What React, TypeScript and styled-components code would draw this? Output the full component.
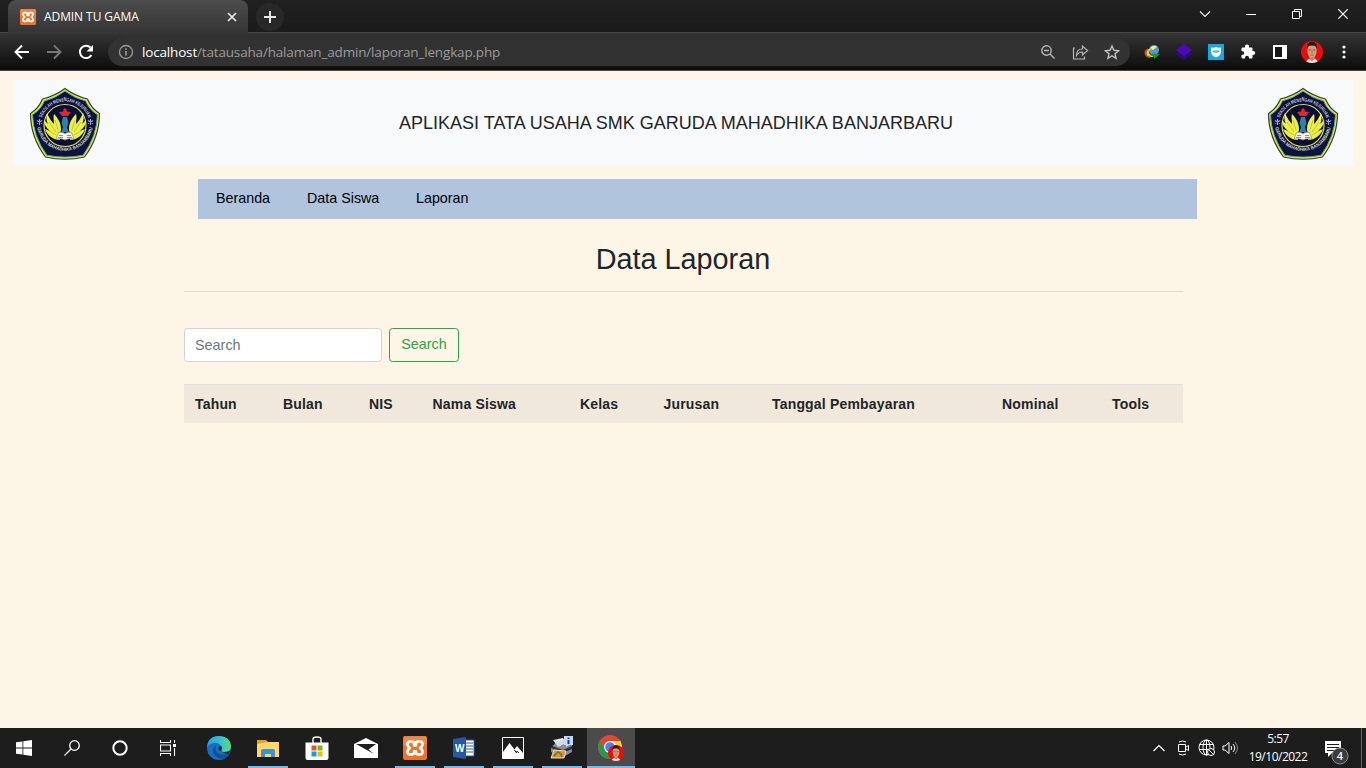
import React from 'react';
import styled, { createGlobalStyle } from 'styled-components';

const Global = createGlobalStyle`
  * { box-sizing: border-box; }
  html, body { margin: 0; padding: 0; overflow: hidden; }
  svg { display: block; flex: none; }
`;

const Screen = styled.div`
  width: 1366px;
  height: 768px;
  display: flex;
  flex-direction: column;
  background: #fdf5e6;
  font-family: 'Liberation Sans', Arial, sans-serif;
`;

/* ---------- browser chrome ---------- */
const TabStrip = styled.div`
  height: 33px;
  flex: none;
  display: flex;
  background: linear-gradient(#202020, #1b1b1b);
  box-shadow: inset 0 -1px 0 #484848;
  padding-left: 8px;
`;
const Tab = styled.div`
  width: 240px;
  height: 33px;
  display: flex;
  align-items: center;
  padding: 1px 10px 0 12px;
  border-radius: 8px 8px 0 0;
  background: linear-gradient(#4c4c4c, #353535);
`;
const TabTitle = styled.span`
  font: 12px/16px 'Open Sans', 'Noto Sans', sans-serif;
  letter-spacing: -0.08px;
  color: #fff;
  margin-left: 8px;
  flex: 1;
  white-space: nowrap;
`;
const NewTab = styled.div`
  width: 28px;
  height: 28px;
  margin: 3px 0 0 8px;
  border-radius: 50%;
  background: #282828;
  display: grid;
  place-items: center;
`;
const WindowButtons = styled.div`
  margin-left: auto;
  display: flex;
  height: 28px;
`;
const WindowButton = styled.div`
  width: 46px;
  display: grid;
  place-items: center;
`;
const Toolbar = styled.div`
  height: 38px;
  flex: none;
  display: flex;
  align-items: center;
  background: linear-gradient(#343434, #0c0c0c);
  border-bottom: 1px solid #484848;
  padding-left: 12px;
`;
const NavIcons = styled.div`
  display: flex;
  flex: none;
  gap: 12px;
  width: 96px;
`;
const AddressBar = styled.div`
  width: 1022px;
  flex: none;
  height: 28px;
  border-radius: 14px;
  background: #323232;
  display: flex;
  align-items: center;
  padding: 0 8px 0 10px;
`;
const Url = styled.div`
  flex: 1;
  margin-left: 8px;
  font: 13.5px/20px 'Open Sans', 'Noto Sans', sans-serif;
  letter-spacing: -0.17px;
  color: #9b9b9b;
  b { font-weight: 400; color: #fff; }
`;
const AddressIcons = styled.div`
  display: flex;
  gap: 12px;
`;
const Extensions = styled.div`
  display: flex;
  align-items: center;
  flex: none;
  width: 224px;
  margin-left: 6px;
`;
const Extension = styled.div`
  width: 32px;
  display: grid;
  place-items: center;
  flex: none;
`;

/* ---------- page ---------- */
const Page = styled.main`
  flex: 1;
  color: #212529;
  padding: 9px 13px 0 14px;
`;
const Header = styled.header`
  height: 86px;
  background: #f8f9fa;
  display: flex;
  align-items: center;
  justify-content: space-between;
  padding: 1px 14px 0 15px;
`;
const HeaderTitle = styled.div`
  font-size: 18px;
  line-height: 27px;
  white-space: nowrap;
  padding: 0 16px 1px 0;
`;
const Container = styled.div`
  width: 999px;
  margin: 13px 0 0 170px;
`;
const Nav = styled.nav`
  height: 40px;
  width: 999px;
  margin-left: 14px;
  padding: 8px 18px;
  display: flex;
  background: #b0c4de;
`;
const NavLink = styled.a<{ $width: number }>`
  width: ${p => p.$width}px;
  font-size: 14.3px;
  line-height: 22px;
  color: #000;
  white-space: nowrap;
`;
const Heading = styled.h3`
  margin: 23px 0 0;
  font-size: 28.8px;
  line-height: 34px;
  font-weight: 400;
  text-align: center;
  padding-right: 1px;
`;
const Rule = styled.hr`
  margin: 15px 0 36px;
  border: 0;
  height: 1px;
  background: #e3dccf;
`;
const SearchForm = styled.form`
  display: flex;
  gap: 7px;
  height: 34px;
  margin-bottom: 22px;
`;
const SearchInput = styled.input`
  width: 198px;
  border: 1px solid #ced4da;
  border-radius: 3.6px;
  background: #fff;
  padding: 0 10px;
  font: 14.4px 'Liberation Sans', Arial, sans-serif;
  &::placeholder { color: #6c757d; opacity: 1; }
`;
const SearchButton = styled.button`
  width: 70px;
  padding: 0 0 2px;
  border: 1px solid #28a745;
  border-radius: 3.6px;
  background: transparent;
  color: #28a745;
  font: 14.4px 'Liberation Sans', Arial, sans-serif;
`;
const Table = styled.table`
  width: 999px;
  table-layout: fixed;
  border-collapse: separate;
  border-spacing: 0;
`;
const HeadCell = styled.th<{ $width: number }>`
  width: ${p => p.$width}px;
  height: 39px;
  padding: 1px 0 0 11px;
  border-top: 1px solid #dee2e6;
  background: #f0e8da;
  text-align: left;
  font-size: 14px;
  line-height: 21px;
  letter-spacing: 0.18px;
  white-space: nowrap;
`;

/* ---------- taskbar ---------- */
const Taskbar = styled.footer`
  height: 40px;
  flex: none;
  display: flex;
  background: #1d1d1d;
`;
const SystemButtons = styled.div`
  display: flex;
  margin-right: 2.5px;
`;
const TaskItem = styled.div`
  width: 48px;
  height: 40px;
  display: grid;
  place-items: center;
`;
const AppItem = styled.div<{ $open?: boolean; $active?: boolean }>`
  width: ${p => (p.$active ? 48 : 40)}px;
  margin: 0 ${p => (p.$active ? 0 : 4.5)}px;
  height: 40px;
  display: grid;
  place-items: center;
  background: ${p => (p.$active ? '#4b4b4b' : 'transparent')};
  box-shadow: ${p => (p.$open || p.$active ? 'inset 0 -2px 0 #76b9ed' : 'none')};
`;
const Tray = styled.div`
  margin-left: auto;
  display: flex;
  align-items: center;
`;
const TrayIcon = styled.div<{ $width: number }>`
  width: ${p => p.$width}px;
  display: grid;
  place-items: center;
`;
const Notifications = styled.div`
  width: 47px;
  padding: 7px 0 0 9px;
`;
const Clock = styled.div`
  width: 72px;
  text-align: center;
  color: #fff;
  font: 12px/18px 'Open Sans', 'Noto Sans', sans-serif;
  letter-spacing: -0.5px;
`;
const ShowDesktop = styled.div`
  width: 5px;
  height: 40px;
  border-left: 1px solid #666;
`;

const Xampp = ({ size }: { size: number }) => (
  <svg width={size} height={size} viewBox="0 0 24 24">
    <rect width="24" height="24" rx="2" fill="#ee7326" />
    <path d="M.5.500h23v8Q12 6 .5 10z" fill="#fff" opacity=".16" />
    <g fill="none" stroke="#fff" strokeWidth="2.600" strokeLinecap="round" strokeLinejoin="round">
      <path d="M9 5.500H7Q4.500 5.500 4.500 8q0 2.700 2.500 4-2.500 1.300-2.500 4 0 2.500 2.500 2.500h2q2 0 2-2v-1h2v1q0 2 2 2h2q2.500 0 2.500-2.500 0-2.700-2.500-4 2.500-1.300 2.500-4 0-2.500-2.500-2.500h-2q-2 0-2 2v2h-2v-2q0-2-2-2z" />
    </g>
    <path d="M10 8.500h4v1.500h-4zM10 14h4v1.500h-4z" fill="#fff" />
  </svg>
);

const Portrait = ({ size }: { size: number }) => (
  <svg width={size} height={size} viewBox="0 0 22 22">
    <defs><clipPath id={`face${size}`}><circle cx="11" cy="11" r="11" /></clipPath></defs>
    <g clipPath={`url(#face${size})`}>
      <rect width="22" height="22" fill="#ed0c0c" />
      <path d="M5 22q0-3 4-4.500l2 2 2-2q4 1.500 4 4.500z" fill="#dfe5e2" />
      <path d="M8.500 14h5v4L11 20l-2.500-2z" fill="#b98360" />
      <path d="M6.500 7Q7 3 11 3t4.500 4q.5 6-1.500 8.500-3 3-6 0Q6 13 6.500 7z" fill="#cf9c7c" />
      <path d="M6 8Q5.500 .8 11 .700q5.500 .100 5 7.300l-1.700-3q-3.300-.8-6.600 0z" fill="#241b1a" />
      <path d="M7.600 9h2.500M12 9h2.500" stroke="#7b4c38" strokeWidth=".9" />
      <path d="M11 9.500v2.500M9.300 14h3.400" stroke="#99634c" strokeWidth=".9" />
    </g>
  </svg>
);

const wing = 'M31 53C24 53 18 48 16 42l5 2c-4-3-6-7-6-11l4 4c-2-4-2-7-1-11 2 5 5 9 7 11 0-4-1-7 0-10 4 4 7 9 7 15 0 3-1 4-3 6 2 1 2 3 2 5z';
const SchoolLogo = ({ id }: { id: string }) => (
  <svg width="72" height="74" viewBox="0 0 72 74">
    <defs>
      <path id={`${id}-top`} d="M12.500 32A24.500 24.500 0 0 1 59.500 32" />
      <path id={`${id}-bottom`} d="M8.300 40A28 28 0 0 0 63.700 40" />
    </defs>
    <path d="M36 1.500Q46 9 58.500 12 62 21 70.500 26.500 70.500 50 55.500 70 36 74.500 16.500 70 1.500 50 1.500 26.500 10 21 13.500 12 26 9 36 1.500z" fill="#e4ec3f" stroke="#37403b" strokeWidth="1.200" />
    <path d="M36 4Q46 11.500 56.700 14 60 22.500 68.500 27.700 68 49 54.200 68.200 36 72 17.800 68.200 4 49 3.500 27.700 12 22.500 15.300 14 26 11.500 36 4z" fill="#0d1242" stroke="#5eb282" strokeWidth="1" />
    <circle cx="36" cy="38.500" r="21" fill="#080e35" stroke="#d9df4b" strokeWidth="1.200" />
    <path d={wing} fill="#edf044" />
    <path d={wing} transform="translate(72 0) scale(-1 1)" fill="#edf044" />
    <path d="M20 35l7 10M26 33l3 10M20 44l7 4M52 35l-7 10M46 33l-3 10M52 44l-7 4" stroke="#a7aa2d" strokeWidth=".6" fill="none" />
    <path d="M34 30h4l1.500 6-1.500 4 1.500 5h-7l1.500-5-1.500-4z" fill="#2d82ad" />
    <path d="M35 21.500h2l1 3 4 .500-3 4h-6l-3-4 4-.5z" fill="#e9242f" />
    <path d="M29.500 45.500q4-1 6.500 1 2.500-2 6.500-1l2.500 6.500q-5-1-9 1-4-2-9-1z" fill="#f4f2e9" stroke="#807e72" strokeWidth=".6" />
    <path d="M30 48.500h4M29 50.500h5M42 48.500h-4M43 50.500h-5" stroke="#777" strokeWidth=".8" />
    <path d="M10.500 32v6M7.900 33.500l5.200 3M7.900 36.500l5.200-3M61.500 32v6M58.900 33.500l5.200 3M58.900 36.500l5.200-3" stroke="#9da6cb" strokeWidth="1.100" />
    <text fontFamily="Liberation Sans" fontSize="4.800" fontWeight="700" fill="#c8cadd" textAnchor="middle"><textPath href={`#${id}-top`} startOffset="50%" textLength="60" lengthAdjust="spacingAndGlyphs">SEKOLAH MENENGAH KEJURUAN</textPath></text>
    <text fontFamily="Liberation Sans" fontSize="4.800" fontWeight="700" fill="#d9dcc0" textAnchor="middle"><textPath href={`#${id}-bottom`} startOffset="50%" textLength="78" lengthAdjust="spacingAndGlyphs">GARUDA MAHADHIKA BANJARBARU</textPath></text>
  </svg>
);

const columns: [string, number][] = [
  ['Tahun', 88], ['Bulan', 86], ['NIS', 63.5], ['Nama Siswa', 147.5], ['Kelas', 83.500],
  ['Jurusan', 108.5], ['Tanggal Pembayaran', 230], ['Nominal', 110], ['Tools', 82],
];

export default function App() {
  return (
    <Screen>
      <Global />
      <TabStrip>
        <Tab>
          <Xampp size={16} />
          <TabTitle>ADMIN TU GAMA</TabTitle>
          <svg width="12" height="12" viewBox="0 0 12 12" stroke="#eee" strokeWidth="1.700"><path d="M2 2l8 8M10 2l-8 8" /></svg>
        </Tab>
        <NewTab><svg width="14" height="14" stroke="#e8e8e8" strokeWidth="2"><path d="M7 1v12M1 7h12" /></svg></NewTab>
        <WindowButtons>
          <WindowButton><svg width="12" height="12" fill="none" stroke="#eee" strokeWidth="1.200"><path d="M1 3.500l5 5 5-5" /></svg></WindowButton>
          <WindowButton><svg width="10" height="10" stroke="#fff"><path d="M0 5.500h10" /></svg></WindowButton>
          <WindowButton><svg width="10" height="10" fill="none" stroke="#fff"><path d="M.5 2.500h7v7h-7zM2.500 2V.5h7v7H8" /></svg></WindowButton>
          <WindowButton><svg width="10" height="10" stroke="#fff" strokeWidth="1.200"><path d="M0 0l10 10M10 0L0 10" /></svg></WindowButton>
        </WindowButtons>
      </TabStrip>
      <Toolbar>
        <NavIcons>
          <svg width="20" height="20" viewBox="0 0 20 20" fill="none" stroke="#fff" strokeWidth="1.900"><path d="M17 10H4M10 3.500L3.500 10l6.500 6.500" /></svg>
          <svg width="20" height="20" viewBox="0 0 20 20" fill="none" stroke="#777" strokeWidth="1.900"><path d="M3 10h13M10 3.500l6.500 6.500-6.500 6.500" /></svg>
          <svg width="20" height="20" viewBox="0 0 20 20"><path d="M15.500 13a6.200 6.200 0 1 1-1-7.500" fill="none" stroke="#fff" strokeWidth="2" /><path d="M17 3v6.500h-6.500z" fill="#fff" /></svg>
        </NavIcons>
        <AddressBar>
          <svg width="16" height="16" fill="none" stroke="#9b9b9b" strokeWidth="1.300"><circle cx="8" cy="8" r="6.500" /><path d="M8 7v4.500M8 4.300v1.500" strokeWidth="1.600" /></svg>
          <Url><b>localhost</b>/tatausaha/halaman_admin/laporan_lengkap.php</Url>
          <AddressIcons>
            <svg width="20" height="20" fill="none" stroke="#b8b8b8" strokeWidth="1.400"><circle cx="8.500" cy="8.500" r="4.700" /><path d="M12 12l4.500 4.500M6 8.500h5" /></svg>
            <svg width="20" height="20" fill="none" stroke="#b8b8b8" strokeWidth="1.200"><path d="M5 6H3.500v11h11v-2.500M6.500 13.500q0-6.500 6-6.500V4l5 4.500-5 4.500v-3q-4 0-6 3.500z" /></svg>
            <svg width="20" height="20" fill="none" stroke="#c0c0c0" strokeWidth="1.400"><path d="M10 4l1.900 4.300 4.700.4-3.600 3.100 1.100 4.600-4.100-2.500-4.100 2.500L7 11.800 3.400 8.700l4.700-.4z" /></svg>
          </AddressIcons>
        </AddressBar>
        <Extensions>
          <Extension><svg width="16" height="14" viewBox="0 0 16 14"><circle cx="10" cy="5" r="5" fill="#5e92cf" /><path d="M6 3q4-4 7-1l-4 3z" fill="#e5eda3" /><path d="M8 3.500Q3 3 2 7.500q0 5 7 4.500l2-1.500q-6 0-6-3.500 0-2 3-3z" fill="#e9d122" /><path d="M4 3.500Q0 4.500.5 8.500 1.500 13 7 13 2 11.500 2.500 7.500q0-2 2-3.500z" fill="#d24432" /><path d="M8 8.500l8 .500-6 5v-2.500q-4 0-5-4 1 1.500 3 1.500z" fill="#169d17" /></svg></Extension>
          <Extension><svg width="16" height="16"><path d="M0 10l8-5 8 5-8 6z" fill="#25107c" /><path d="M0 6l8-6 8 6-8 6z" fill="#4c08bb" /></svg></Extension>
          <Extension><svg width="16" height="16"><path d="M0 0h16v16H0z" fill="#12a9e8" /><path d="M3 3.500q3 .500 5-.500 2 1 5 .500v4Q13 12 8 13.500 3 12 3 7.500z" fill="#fff" /><path d="M4.500 7.500q3.500-2.500 7 0-3.500 3-7 0z" fill="#12a9e8" /><path d="M6.500 8h3" stroke="#d7f2ff" /></svg></Extension>
          <Extension><svg width="16" height="16"><path d="M1.500 4.500q0-1 1-1H5q-.5-3 2-3t2 3h2.500q1 0 1 1V7q2.800-.3 2.800 1.900T12.500 11v2.500q0 1-1 1H9q.2-2.800-2-2.800t-2 2.800H2.500q-1 0-1-1V11q2.700.1 2.700-2T1.500 7z" fill="#fff" /></svg></Extension>
          <Extension><svg width="14" height="14"><path d="M0 0h14v14H0z" fill="#fff" /><path d="M2 2h7v10H2z" fill="#171717" /></svg></Extension>
          <Extension><Portrait size={22} /></Extension>
          <Extension><svg width="4" height="14" fill="#fff"><circle cx="2" cy="2" r="1.600" /><circle cx="2" cy="7" r="1.600" /><circle cx="2" cy="12" r="1.600" /></svg></Extension>
        </Extensions>
      </Toolbar>
      <Page>
        <Header>
          <SchoolLogo id="left" />
          <HeaderTitle>APLIKASI TATA USAHA SMK GARUDA MAHADHIKA BANJARBARU</HeaderTitle>
          <SchoolLogo id="right" />
        </Header>
        <Container>
          <Nav><NavLink $width={91}>Beranda</NavLink><NavLink $width={109}>Data Siswa</NavLink><NavLink $width={60}>Laporan</NavLink></Nav>
          <Heading>Data Laporan</Heading>
          <Rule />
          <SearchForm><SearchInput placeholder="Search" /><SearchButton type="button">Search</SearchButton></SearchForm>
          <Table><thead><tr>{columns.map(([name, width]) => <HeadCell key={name} $width={width}>{name}</HeadCell>)}</tr></thead></Table>
        </Container>
      </Page>
      <Taskbar>
        <SystemButtons>
          <TaskItem><svg width="16" height="16" fill="#fff"><path d="M0 2.300l6.500-.9v6.200H0zM7.300 1.300L16 0v7.600H7.300zM0 8.400h6.500v6.200L0 13.700zM7.300 8.400H16V16l-8.700-1.300z" /></svg></TaskItem>
          <TaskItem><svg width="16" height="16" fill="none" stroke="#fff" strokeWidth="1.300"><circle cx="10.500" cy="5.500" r="4.800" /><path d="M7 9L.5 15.500" /></svg></TaskItem>
          <TaskItem><svg width="16" height="16" fill="none" stroke="#fff" strokeWidth="2"><circle cx="8" cy="8" r="6.700" /></svg></TaskItem>
          <TaskItem><svg width="16" height="16" fill="none" stroke="#fff" strokeWidth="1.100"><path d="M.5 0v2.500h10V0M.5 16v-2.500h10V16M.5 5h10v6H.5zM14.500 0v3M14.500 8v8" /><path d="M13 4h3v3h-3z" fill="#fff" stroke="none" /></svg></TaskItem>
        </SystemButtons>
        <AppItem>
          <svg width="24" height="24" viewBox="0 0 24 24"><defs><linearGradient id="edgeTop"><stop stopColor="#249cdf" /><stop offset=".6" stopColor="#32c6cf" /><stop offset="1" stopColor="#62dc62" /></linearGradient></defs><circle cx="12" cy="12" r="12" fill="#1270c5" /><path d="M0 11Q1 0 12 0q11 0 12 10 0 6-7 6-4 0-3-2 2-2 0-4.500Q11 6 6 7q-4 1-6 4z" fill="url(#edgeTop)" /><path d="M9 9q-6 5-1 11 4 4 10 2 3-1 4-4-7 2-11-1-4-3-2-8z" fill="#154e96" /><path d="M15 15.500q-4-1-3.500-3.500.5-1.500 2.500-2 2 2 .500 4-.5 1.500 2.500 2 3 0 6-1l-1 3q-4 0-7-2.500z" fill="#1d252b" /></svg>
        </AppItem>
        <AppItem $open><svg width="22" height="19" viewBox="0 0 22 19"><path d="M0 1h9l2 2h11v15H0z" fill="#e4a311" /><path d="M0 5l10-2h12v15H0z" fill="#ffd767" /><path d="M4 18v-6q0-2 2-2h10q2 0 2 2v6h-4v-3H8v3z" fill="#3b91d5" /></svg></AppItem>
        <AppItem><svg width="24" height="24" viewBox="0 0 24 24"><path d="M8 7V3q0-2 4-2t4 2v4" fill="none" stroke="#fff" strokeWidth="1.400" /><path d="M.5 6.500h23V22q0 2-2 2h-19q-2 0-2-2z" fill="#fff" /><path d="M6.500 9.500h5v5h-5z" fill="#f25022" /><path d="M12.500 9.500h5v5h-5z" fill="#7fba00" /><path d="M6.500 15.500h5v5h-5z" fill="#00a4ef" /><path d="M12.500 15.500h5v5h-5z" fill="#ffb900" /></svg></AppItem>
        <AppItem><svg width="24" height="20"><path d="M0 6l12-6 12 6v14H0z" fill="#fff" /><path d="M2 6h20l-7.500 5.500L20 16 2 6z" fill="#1d1d1d" /></svg></AppItem>
        <AppItem $open><Xampp size={24} /></AppItem>
        <AppItem $open><svg width="24" height="24"><path d="M12 4h10v16H12z" fill="#fff" stroke="#295fa8" /><path d="M14 7h7M14 10h7M14 13h7M14 16h7" stroke="#295fa8" /><path d="M1 3l13-2v22L1 21z" fill="#2757a3" /><text x="3" y="16" fill="#fff" fontFamily="Liberation Sans" fontWeight="700" fontSize="10">W</text></svg></AppItem>
        <AppItem $open><svg width="22" height="22"><path d="M.5.5h21v21H.5z" fill="#1d1d1d" stroke="#fff" /><path d="M1 21v-6l6.500-9 5 6.500L15 9l6 7v5z" fill="#fff" /><path d="M12.500 13l2 3 .500-2 2 2" fill="none" stroke="#1d1d1d" /></svg></AppItem>
        <AppItem $open><svg width="24" height="24"><path d="M1 12l6-7 15 3v8l-9 5-12-5z" fill="#858d90" /><path d="M3 4l10-2 3 5-8 4z" fill="#d4dcde" /><path d="M6 5l7-2" stroke="#fff" /><path d="M2 10l11 4 9-4v3l-9 4-12-5z" fill="#2d3337" /><path d="M4 14l12 1-2 7H1z" fill="#f08d2c" stroke="#ddd" /><path d="M4 20l4-4 3 2 1 3" stroke="#3d8836" strokeWidth="1.500" fill="none" /><path d="M14 0h9v9h-4l-3 2V9h-2z" fill="#c7d9fb" /><path d="M18.500 1.500v1.500M18.500 4v4" stroke="#0c3cb1" strokeWidth="2" /></svg></AppItem>
        <AppItem $active><svg width="26" height="26" viewBox="0 0 26 26"><circle cx="12" cy="12" r="12" fill="#e74436" /><path d="M1.700 6L8 16l4 2v6Q1 23 0 12 0 9 1.700 6z" fill="#259c4a" /><path d="M12 6h10.500q6 14-10.500 18l5-9z" fill="#ffcd34" /><circle cx="12" cy="12" r="6" fill="#fff" /><circle cx="12" cy="12" r="4.800" fill="#4285f4" /><svg x="10" y="10" width="16" height="16"><Portrait size={16} /></svg></svg></AppItem>
        <Tray>
          <TrayIcon $width={24}><svg width="12" height="8" fill="none" stroke="#fff" strokeWidth="1.200"><path d="M.5 7L6 1.500 11.500 7" /></svg></TrayIcon>
          <TrayIcon $width={24}><svg width="12" height="16" fill="none" stroke="#fff"><path d="M1.500 4.500h7v7h-7zM9 7l2.500-1.500v5L9 9M2 2q3.500-2 7 0M2 14q3.500 2 7 0" /></svg></TrayIcon>
          <TrayIcon $width={24}><svg width="18" height="18" fill="none" stroke="#fff"><circle cx="8.500" cy="8.500" r="7.500" /><ellipse cx="8.500" cy="8.500" rx="3.500" ry="7.500" /><path d="M1.500 5.500h14M1.500 10.500h10M8.500 1v15" /><circle cx="13" cy="13" r="3.500" fill="#1d1d1d" /><path d="M10.500 10.500l5 5" /></svg></TrayIcon>
          <TrayIcon $width={23}><svg width="17" height="14" fill="none" stroke="#fff"><path d="M1 5h2l4-3.500v11L3 9H1zM9 5q1.500 2 0 4M11 3q3.500 4 0 8" /><path d="M13 1q5 6 0 12" stroke="#888" /></svg></TrayIcon>
          <Clock>5:57<br />19/10/2022</Clock>
          <Notifications><svg width="26" height="26"><path d="M2 2h16v12h-9l-4 4v-4H2z" fill="#fff" /><path d="M4 5.500h12M4 8.500h12M4 11.500h9" stroke="#1d1d1d" /><circle cx="17" cy="17" r="8" fill="#3c3c3c" stroke="#8b8b8b" /><text x="17" y="21" textAnchor="middle" fill="#fff" fontFamily="Open Sans" fontSize="11" fontWeight="600">4</text></svg></Notifications>
          <ShowDesktop />
        </Tray>
      </Taskbar>
    </Screen>
  );
}
